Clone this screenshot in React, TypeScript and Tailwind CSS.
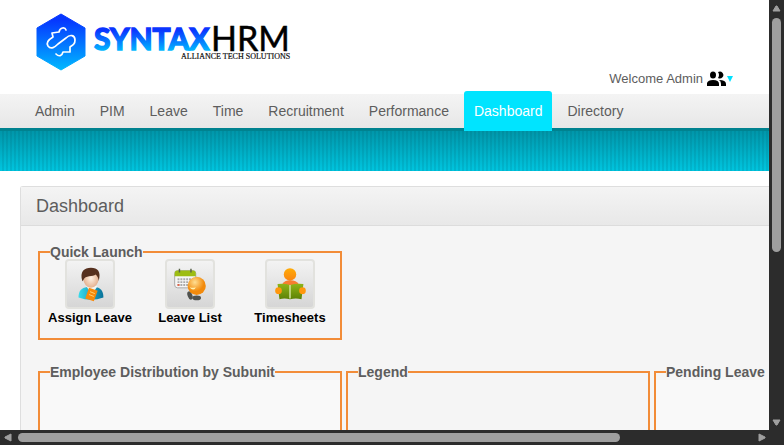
import type { ReactNode } from "react";

const menu = ["Admin", "PIM", "Leave", "Time", "Recruitment", "Performance", "Dashboard", "Directory"];

function Logo() {
  return (
    <svg className="block h-[72px] w-[270px]" viewBox="30 6 270 72" role="img" aria-label="Syntax HRM, Alliance Tech Solutions">
      <defs>
        <linearGradient id="hex" x1="0" y1="0" x2="0" y2="1">
          <stop offset="0.1" stopColor="#0636ff" />
          <stop offset="1" stopColor="#00b9ff" />
        </linearGradient>
        <linearGradient id="word" gradientUnits="userSpaceOnUse" x1="0" y1="28" x2="0" y2="52">
          <stop offset="0.1" stopColor="#0a36ff" />
          <stop offset="1" stopColor="#00c0ff" />
        </linearGradient>
      </defs>
      <path d="M61 14 L85 28 V56 L61 70 L37 56 V28 Z" fill="url(#hex)" stroke="url(#hex)" strokeLinejoin="round" />
      <g fill="none" stroke="#fff" strokeWidth="1.7" strokeLinecap="round" strokeLinejoin="round">
        <path d="M66 30 C65 27 60 27 59 32 L52 33 L53 37 C48 40 46 43 48 46 C51 50 55 47 58 44 L66 38 C70 34 75 35 75 40 C75 44 73 45 70 47 L70 52 L63 52 C62 56 59 57 56 54" />
      </g>
      <text x="94" y="50" fill="url(#word)" stroke="url(#word)" strokeWidth="1.5" fontFamily="Lato, sans-serif" fontWeight="700" fontSize="30">SYNTAX</text>
      <text x="211" y="51" fill="#000" stroke="#000" strokeWidth="0.5" fontFamily="Lato, sans-serif" fontSize="34">HRM</text>
      <text x="181" y="59" fill="#111" stroke="#111" strokeWidth="0.2" fontFamily="Liberation Serif, serif" fontSize="8">ALLIANCE TECH SOLUTIONS</text>
    </svg>
  );
}

function AssignIcon() {
  return (
    <svg viewBox="0 0 48 48" className="size-12">
      <defs>
        <linearGradient id="shirt" x2="1" y2="0"><stop stopColor="#38dcec" /><stop offset="1" stopColor="#087199" /></linearGradient>
        <radialGradient id="face"><stop stopColor="#fff2e5" /><stop offset="1" stopColor="#e5b18f" /></radialGradient>
      </defs>
      <path d="M12 38 C12 31 15 28 21 27 L30 27 C35 28 38 31 38 38 Q25 43 12 38 Z" fill="url(#shirt)" />
      <path d="M20 26 L26 35 L32 26 Z" fill="#f5f5f2" />
      <ellipse cx="25" cy="18" rx="8" ry="10" fill="url(#face)" />
      <path d="M16 21 C13 11 18 7 25 7 C32 7 36 11 33 21 C33 18 32 16 30 14 C27 17 19 14 17 20 Z" fill="#56301e" />
      <path d="M23 28 L32 31 L28 42 L19 39 Z" fill="#f78a0b" />
      <path d="M24 32 L29 34 M23 35 L28 37" stroke="#ffd477" strokeWidth="1" />
    </svg>
  );
}

function LeaveIcon() {
  return (
    <svg viewBox="0 0 48 48" className="size-12">
      <defs>
        <radialGradient id="ball" cx="40%" cy="30%"><stop stopColor="#ffdf93" /><stop offset="1" stopColor="#f28a0c" /></radialGradient>
      </defs>
      <rect x="8" y="10" width="22" height="18" rx="3" fill="#f6f6f6" stroke="#a8a8a8" />
      <path d="M8 16 V13 Q8 10 11 10 H27 Q30 10 30 13 V16 Z" fill="#9dbd13" />
      <path d="M13 8 V12 M25 8 V12" stroke="#58624a" strokeWidth="1.5" />
      <path d="M11 19 H28 M11 22 H28 M11 25 H24" stroke="#aaaaaa" strokeWidth="2" strokeDasharray="2 1" />
      <path d="M11 25 H13" stroke="#e56145" strokeWidth="2" />
      <ellipse cx="24" cy="36" rx="2.5" ry="4.5" fill="#50524f" transform="rotate(-20 24 36)" />
      <ellipse cx="31" cy="38.5" rx="4.5" ry="2.5" fill="#50524f" />
      <circle cx="31" cy="26" r="9.5" fill="url(#ball)" />
      <path d="M24 27 Q27 29 30 27 Q29 31 25 29 Z" fill="#fff2b0" />
    </svg>
  );
}

function TimeIcon() {
  return (
    <svg viewBox="0 0 48 48" className="size-12">
      <defs>
        <linearGradient id="book" x2="0" y2="1"><stop stopColor="#8fb51a" /><stop offset="1" stopColor="#5c8104" /></linearGradient>
        <linearGradient id="head" x2="0" y2="1"><stop stopColor="#ffac07" /><stop offset="1" stopColor="#fa8512" /></linearGradient>
      </defs>
      <path d="M16 24 Q18 20 24 20 Q31 20 33 24 L24 26 Z" fill="#f77d31" />
      <circle cx="24" cy="14" r="6.5" fill="url(#head)" />
      <path d="M11 24 Q18 23 24 25 Q31 23 38 24 L36 40 Q30 38 24 40 Q18 38 13 40 Z" fill="url(#book)" />
      <path d="M24 25 V39" stroke="#d9e6a4" strokeWidth="1.5" />
      <circle cx="12" cy="31" r="3.5" fill="#ff970d" />
      <circle cx="37" cy="31" r="3.5" fill="#ff970d" />
    </svg>
  );
}

function Launch({ label, children }: { label: string; children: ReactNode }) {
  return (
    <a href="#" className="flex w-[100px] flex-col items-center text-[13px] leading-4 font-bold whitespace-nowrap text-black">
      <span className="flex size-[50px] items-center justify-center rounded border-2 border-[#e2e2de] bg-linear-to-b from-[#f3f3f3] to-[#d6d6d6]">
        {children}
      </span>
      <span className="mt-px">{label}</span>
    </a>
  );
}

function Box({ title, fill }: { title: string; fill: string }) {
  return (
    <fieldset className="h-[200px] w-[304px] shrink-0 border-2 border-[#f28c38] pl-[10px]">
      <legend className="text-sm leading-4 font-bold">{title}</legend>
      <div className={`-ml-[10px] h-full ${fill}`} />
    </fieldset>
  );
}

function Arrow({ d, label }: { d: string; label: string }) {
  return (
    <button type="button" aria-label={label} className="flex size-[15px] shrink-0 items-center justify-center">
      <svg viewBox="0 0 15 15" className="size-[15px]">
        <path d={d} fill="#9f9f9f" stroke="#9f9f9f" strokeLinejoin="round" />
      </svg>
    </button>
  );
}

export default function App() {
  return (
    <div className="grid h-screen grid-cols-[minmax(0,1fr)_15px] grid-rows-[minmax(0,1fr)_15px] bg-[#2c2c2c] font-['Liberation_Sans',Arial,sans-serif] text-[#5d5d5d]">
      <div className="overflow-hidden bg-white">
        <header className="flex h-[94px] items-start justify-between pt-[6px] pr-9 pl-[30px]">
          <Logo />
          <button type="button" className="mt-[65px] flex items-center text-[13px] leading-4 whitespace-nowrap">
            Welcome Admin
            <svg viewBox="0 0 20 16" className="ml-1 h-4 w-5" fill="#000">
              <ellipse cx="6" cy="4" rx="3" ry="3.5" />
              <path d="M11 1 A3.5 3.5 0 1 1 11 7 Q13 4 11 1" />
              <path d="M0 15 V12 Q1 9 6 9 Q12 9 12 13 V15 Z" />
              <path d="M12 9 Q19 9 19 13 V15 H14 V13 Q14 10 12 9" />
            </svg>
            <svg viewBox="0 0 6 6" className="h-[6px] w-[6px]"><path d="M0 0 H6 L3 6 Z" fill="#00e1ff" /></svg>
          </button>
        </header>
        <nav className="relative z-10 flex h-[34px] items-end gap-[5px] bg-linear-to-b from-[#f4f4f4] to-[#e7e7e7] pl-[25px] text-sm leading-[34px] whitespace-nowrap">
          {menu.map((item) => (
            <a
              key={item}
              href="#"
              className={item === "Dashboard" ? "-mb-[3px] rounded-t-[3px] bg-[#00e4ff] px-[10px] py-[3px] text-white" : "px-[10px]"}
            >
              {item}
            </a>
          ))}
        </nav>
        <div className="flex h-[43px] flex-col bg-linear-to-b from-[#0093a6] to-[#00c5df]">
          <div className="h-[3px] bg-[#00828f]" />
          <div className="flex-1 bg-[repeating-linear-gradient(90deg,transparent_0_2px,rgba(0,75,90,0.12)_2px_4px)]" />
        </div>
        <main className="mt-[15px] ml-5 rounded-tl-[3px] border-t border-l border-[#dedede] bg-[#f5f5f5]">
          <h1 className="h-[39px] border-b border-[#dcdcdc] bg-linear-to-b from-[#f4f4f4] to-[#e8e8e8] pl-[15px] text-lg leading-[38px]">Dashboard</h1>
          <div className="pt-[18px] pl-[17px]">
            <fieldset className="h-24 w-[304px] border-2 border-[#f28c38] text-sm">
              <legend className="ml-[10px] leading-4 font-bold">Quick Launch</legend>
              <div className="-mt-px flex">
                <Launch label="Assign Leave"><AssignIcon /></Launch>
                <Launch label="Leave List"><LeaveIcon /></Launch>
                <Launch label="Timesheets"><TimeIcon /></Launch>
              </div>
            </fieldset>
            <div className="mt-6 flex gap-1">
              <Box title="Employee Distribution by Subunit" fill="bg-[#f9f9f9]" />
              <Box title="Legend" fill="bg-[#f5f5f5]" />
              <Box title="Pending Leave Requests" fill="bg-[#f9f9f9]" />
            </div>
          </div>
        </main>
      </div>
      <div className="flex flex-col items-center">
        <Arrow label="Scroll up" d="M4 11 L7 6 L8 6 L11 11 Z" />
        <div className="flex w-full flex-1 justify-center pt-[3px]">
          <div className="h-[59%] w-[9px] rounded-full bg-[#9f9f9f]" />
        </div>
        <Arrow label="Scroll down" d="M4 5 L7 10 L8 10 L11 5 Z" />
      </div>
      <div className="flex items-center">
        <Arrow label="Scroll left" d="M11 4 L5 7 L5 8 L11 11 Z" />
        <div className="flex-1 pl-[3px]">
          <div className="h-[9px] w-9/11 rounded-full bg-[#9f9f9f]" />
        </div>
        <Arrow label="Scroll right" d="M5 4 L11 7 L11 8 L5 11 Z" />
      </div>
    </div>
  );
}
